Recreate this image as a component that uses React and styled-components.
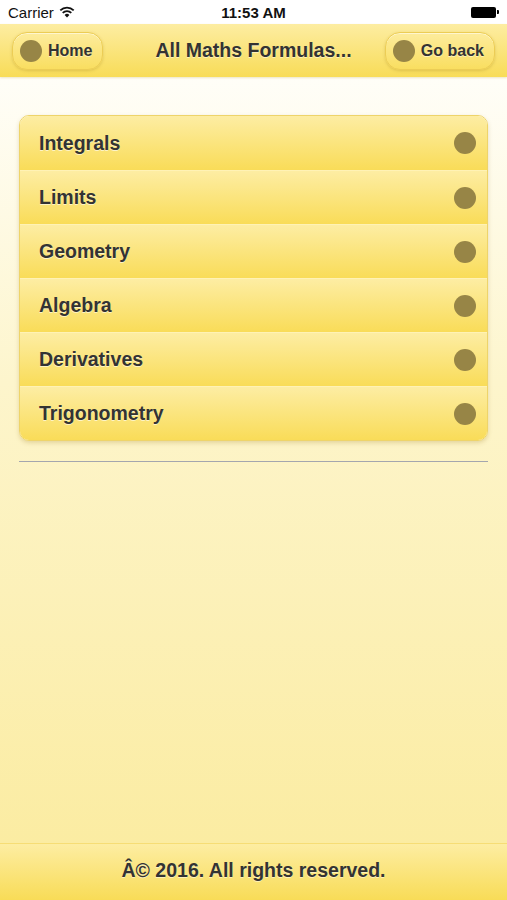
import styled, { createGlobalStyle } from "styled-components";

const GlobalStyle = createGlobalStyle`
  html, body {
    margin: 0;
    padding: 0;
  }
  body {
    font-family: "Liberation Sans", Arial, sans-serif;
    background: #ffffff;
  }
`;

const topics = [
  "Integrals",
  "Limits",
  "Geometry",
  "Algebra",
  "Derivatives",
  "Trigonometry",
];

const Screen = styled.div`
  width: 507px;
  height: 900px;
  display: flex;
  flex-direction: column;
  overflow: hidden;
`;

const StatusBar = styled.div`
  height: 24px;
  display: grid;
  grid-template-columns: 1fr auto 1fr;
  align-items: center;
  padding: 0 8px;
  background: #ffffff;
  font-size: 15px;
  color: #111;
`;

const Carrier = styled.div`
  display: flex;
  align-items: center;
  gap: 5px;
`;

const Clock = styled.div`
  font-weight: 700;
`;

const Battery = styled.div`
  justify-self: end;
  display: flex;
  align-items: center;
  gap: 1px;

  span {
    display: block;
    width: 25px;
    height: 11px;
    border-radius: 2px;
    background: #000;
  }

  i {
    display: block;
    width: 2px;
    height: 4px;
    background: #000;
    border-radius: 0 1px 1px 0;
  }
`;

const Header = styled.header`
  height: 53px;
  display: grid;
  grid-template-columns: 1fr auto 1fr;
  align-items: center;
  padding: 0 12px;
  background: linear-gradient(#fdeda2, #f8dc57);
  box-shadow: 0 1px 2px rgba(180, 150, 40, 0.25);
  position: relative;
  z-index: 1;
`;

const Title = styled.h1`
  margin: 0;
  font-size: 19.5px;
  font-weight: 700;
  color: #333;
  text-shadow: 0 1px 0 rgba(255, 255, 255, 0.5);
`;

const NavButton = styled.button`
  justify-self: ${(p) => (p.$end ? "end" : "start")};
  height: 38px;
  display: flex;
  align-items: center;
  gap: 6px;
  padding: 0 10px 0 7px;
  border: 1px solid #eccd55;
  border-radius: 15px;
  background: linear-gradient(#fdec9d, #f9de60);
  box-shadow: 0 1px 3px rgba(160, 130, 30, 0.3),
    inset 0 1px 0 rgba(255, 255, 255, 0.5);
  font-family: inherit;
  font-size: 16px;
  font-weight: 700;
  color: #333;
  text-shadow: 0 1px 0 rgba(255, 255, 255, 0.5);
`;

const Dot = styled.span`
  display: block;
  width: ${(p) => p.$size}px;
  height: ${(p) => p.$size}px;
  border-radius: 50%;
  background: #978546;
  flex-shrink: 0;
`;

const Content = styled.main`
  flex: 1;
  display: flex;
  flex-direction: column;
  padding: 38px 19px 0;
  background: linear-gradient(#fffef8 0%, #fdf5cc 40%, #fbeca2 100%);
`;

const Card = styled.ul`
  list-style: none;
  margin: 0;
  padding: 0;
  border: 1px solid #eed46a;
  border-radius: 10px;
  overflow: hidden;
  box-shadow: 0 2px 4px rgba(150, 120, 30, 0.25);
`;

const Row = styled.li`
  height: 54px;
  display: flex;
  align-items: center;
  justify-content: space-between;
  padding: 0 11px 0 19px;
  background: linear-gradient(#fdeda3, #f9dc58);
  border-top: 1px solid #fff2b5;
  box-sizing: border-box;
  font-size: 19.5px;
  font-weight: 700;
  color: #333;
  text-shadow: 0 1px 0 rgba(255, 255, 255, 0.6);

  &:first-child {
    border-top: none;
  }
`;

const Divider = styled.hr`
  margin: 20px 0 0;
  border: none;
  border-top: 1px solid #a4a6ae;
`;

const Footer = styled.footer`
  height: 57px;
  display: flex;
  align-items: center;
  justify-content: center;
  padding-bottom: 3px;
  box-sizing: border-box;
  background: linear-gradient(#fdeda2, #f8dc57);
  border-top: 1px solid #f6dd75;
  font-size: 19.5px;
  font-weight: 700;
  color: #333;
  text-shadow: 0 1px 0 rgba(255, 255, 255, 0.5);
`;

const Wifi = () => (
  <svg width="16" height="12" viewBox="0 0 16 12">
    <path d="M8 11.5 L5.6 8.9 A3.4 3.4 0 0 1 10.4 8.9 Z" fill="#111" />
    <path
      d="M3.7 6.9 A6.1 6.1 0 0 1 12.3 6.9"
      stroke="#111"
      strokeWidth="1.8"
      fill="none"
    />
    <path
      d="M1.3 4.4 A9.5 9.5 0 0 1 14.7 4.4"
      stroke="#111"
      strokeWidth="1.8"
      fill="none"
    />
  </svg>
);

export default function App() {
  return (
    <>
      <GlobalStyle />
      <Screen>
        <StatusBar>
          <Carrier>
            Carrier <Wifi />
          </Carrier>
          <Clock>11:53 AM</Clock>
          <Battery>
            <span />
            <i />
          </Battery>
        </StatusBar>
        <Header>
          <NavButton>
            <Dot $size={22} />
            Home
          </NavButton>
          <Title>All Maths Formulas...</Title>
          <NavButton $end>
            <Dot $size={22} />
            Go back
          </NavButton>
        </Header>
        <Content>
          <Card>
            {topics.map((t) => (
              <Row key={t}>
                {t}
                <Dot $size={22} />
              </Row>
            ))}
          </Card>
          <Divider />
        </Content>
        <Footer>Â© 2016. All rights reserved.</Footer>
      </Screen>
    </>
  );
}
